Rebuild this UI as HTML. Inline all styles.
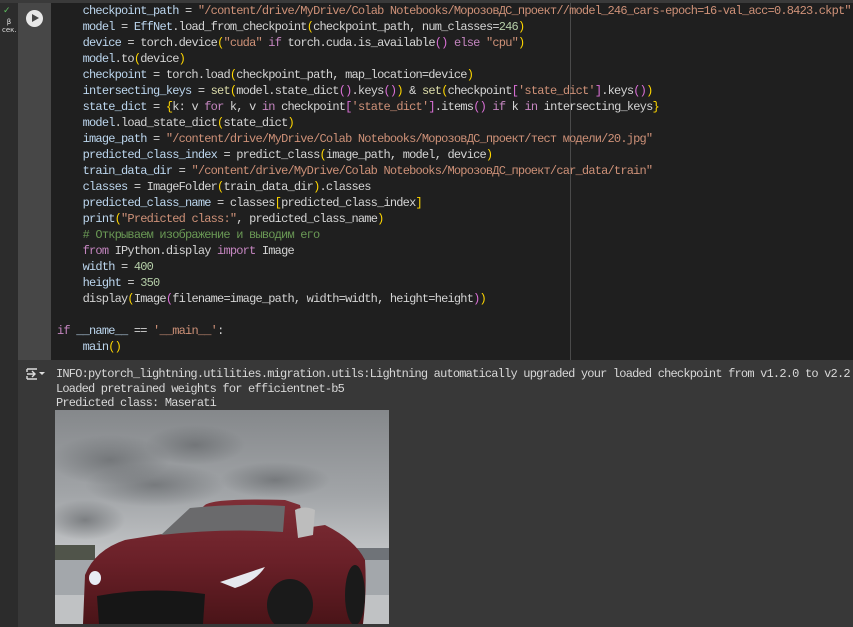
<!DOCTYPE html>
<html><head><meta charset="utf-8"><style>
*{margin:0;padding:0;box-sizing:border-box}
body{width:853px;height:627px;overflow:hidden;background:#383838;position:relative;font-family:"Liberation Mono","DejaVu Sans Mono",monospace}
.g1{position:absolute;left:0;top:0;width:18px;height:627px;background:#2c2c2c}
.top{position:absolute;left:0;top:0;width:853px;height:3px;background:#3a3a3a}
.g2{position:absolute;left:18px;top:3px;width:33px;height:357px;background:#474747}
.code{position:absolute;left:51px;top:3px;width:802px;height:357px;background:#1f1f1f}
.div{position:absolute;left:570px;top:3px;width:1px;height:357px;background:#4a4a4a}
pre{position:absolute;left:57px;top:3px;font-family:inherit;font-size:12px;letter-spacing:-0.8px;line-height:16px;color:#d4d4d4;white-space:pre}
.v{color:#bcd6ee}.s{color:#ce9178}.b{color:#ffd700}.k{color:#c586c0}.n{color:#b5cea8}.c{color:#6a9955}.f{color:#dcdcaa}.p{color:#da70d6}
.out{position:absolute;left:56px;top:367px;font-size:12px;letter-spacing:-0.8px;line-height:14.5px;color:#d8d8d8;white-space:pre}
.run{position:absolute;left:26px;top:10px;width:17px;height:17px;border-radius:50%;background:#e8e8e8}
.run:after{content:"";position:absolute;left:6px;top:4px;border-left:7px solid #474747;border-top:4.5px solid transparent;border-bottom:4.5px solid transparent}
.tick{position:absolute;left:3px;top:6px;font-family:"DejaVu Sans",sans-serif;font-size:9px;color:#5fbf5f}
.sec{position:absolute;left:2px;top:18px;font-family:"DejaVu Sans",sans-serif;font-size:7px;color:#ddd;line-height:8px;text-align:center;width:14px}
</style></head><body>
<div class="g1"></div><div class="top"></div><div class="g2"></div><div class="code"></div><div class="div"></div>
<div class="tick">✓</div><div class="sec">β<br>сек.</div>
<div class="run"></div>
<pre>    <span class="v">checkpoint_path</span> = <span class="s">"/content/drive/MyDrive/Colab Notebooks/МорозовДС_проект//model_246_cars-epoch=16-val_acc=0.8423.ckpt"</span>
    <span class="v">model</span> = <span class="v">EffNet</span>.load_from_checkpoint<span class="b">(</span>checkpoint_path, num_classes=<span class="n">246</span><span class="b">)</span>
    <span class="v">device</span> = torch.device<span class="b">(</span><span class="s">"cuda"</span> <span class="k">if</span> torch.cuda.is_available<span class="p">()</span> <span class="k">else</span> <span class="s">"cpu"</span><span class="b">)</span>
    <span class="v">model</span>.to<span class="b">(</span>device<span class="b">)</span>
    <span class="v">checkpoint</span> = torch.load<span class="b">(</span>checkpoint_path, map_location=device<span class="b">)</span>
    <span class="v">intersecting_keys</span> = <span class="f">set</span><span class="b">(</span>model.state_dict<span class="p">()</span>.keys<span class="p">()</span><span class="b">)</span> &amp; <span class="f">set</span><span class="b">(</span>checkpoint<span class="p">[</span><span class="s">'state_dict'</span><span class="p">]</span>.keys<span class="p">()</span><span class="b">)</span>
    <span class="v">state_dict</span> = <span class="b">{</span>k: v <span class="k">for</span> k, v <span class="k">in</span> checkpoint<span class="p">[</span><span class="s">'state_dict'</span><span class="p">]</span>.items<span class="p">()</span> <span class="k">if</span> k <span class="k">in</span> intersecting_keys<span class="b">}</span>
    <span class="v">model</span>.load_state_dict<span class="b">(</span>state_dict<span class="b">)</span>
    <span class="v">image_path</span> = <span class="s">"/content/drive/MyDrive/Colab Notebooks/МорозовДС_проект/тест модели/20.jpg"</span>
    <span class="v">predicted_class_index</span> = predict_class<span class="b">(</span>image_path, model, device<span class="b">)</span>
    <span class="v">train_data_dir</span> = <span class="s">"/content/drive/MyDrive/Colab Notebooks/МорозовДС_проект/car_data/train"</span>
    <span class="v">classes</span> = ImageFolder<span class="b">(</span>train_data_dir<span class="b">)</span>.classes
    <span class="v">predicted_class_name</span> = classes<span class="b">[</span>predicted_class_index<span class="b">]</span>
    <span class="v">print</span><span class="b">(</span><span class="s">"Predicted class:"</span>, predicted_class_name<span class="b">)</span>
    <span class="c"># Открываем изображение и выводим его</span>
    <span class="k">from</span> IPython.display <span class="k">import</span> Image
    <span class="v">width</span> = <span class="n">400</span>
    <span class="v">height</span> = <span class="n">350</span>
    display<span class="b">(</span>Image<span class="p">(</span>filename=image_path, width=width, height=height<span class="p">)</span><span class="b">)</span>

<span class="k">if</span> <span class="v">__name__</span> == <span class="s">'__main__'</span>:
    <span class="v">main</span><span class="b">()</span></pre>
<svg style="position:absolute;left:26px;top:367px" width="20" height="14" viewBox="0 0 20 14"><g stroke="#ddd" stroke-width="1.4" fill="none"><path d="M1 2h10M1 12h10M1 2v3M1 12v-3M1 7h8M6 4l3 3-3 3"/></g><path d="M13 5h6l-3 3z" fill="#ddd"/></svg>
<div class="out">INFO:pytorch_lightning.utilities.migration.utils:Lightning automatically upgraded your loaded checkpoint from v1.2.0 to v2.2
Loaded pretrained weights for efficientnet-b5
Predicted class: Maserati</div>
<svg style="position:absolute;left:55px;top:410px" width="334" height="214" viewBox="0 0 334 214">
<defs><linearGradient id="sk" x1="0" y1="0" x2="0" y2="1"><stop offset="0" stop-color="#85888b"/><stop offset=".4" stop-color="#a2a5a8"/><stop offset=".7" stop-color="#c6c8ca"/><stop offset="1" stop-color="#d4d6d8"/></linearGradient>
<radialGradient id="cl" cx=".5" cy=".5" r=".5"><stop offset="0" stop-color="#66696c" stop-opacity=".7"/><stop offset="1" stop-color="#66696c" stop-opacity="0"/></radialGradient>
<linearGradient id="car" x1="0" y1="0" x2="0" y2="1"><stop offset="0" stop-color="#7e2e36"/><stop offset=".5" stop-color="#6a2028"/><stop offset="1" stop-color="#4a1418"/></linearGradient></defs>
<rect width="334" height="214" fill="url(#sk)"/>
<ellipse cx="55" cy="50" rx="60" ry="25" fill="url(#cl)"/><ellipse cx="140" cy="35" rx="50" ry="20" fill="url(#cl)"/><ellipse cx="100" cy="75" rx="70" ry="22" fill="url(#cl)"/><ellipse cx="220" cy="70" rx="55" ry="18" fill="url(#cl)"/><ellipse cx="30" cy="110" rx="40" ry="20" fill="url(#cl)"/>
<rect y="148" width="334" height="40" fill="#a3a7ab"/><rect y="185" width="334" height="29" fill="#c0c2c4"/>
<rect x="0" y="135" width="40" height="15" fill="#50544a"/><rect x="300" y="138" width="34" height="12" fill="#6f7378"/>
<path d="M28 214 L30 165 Q40 140 70 130 L120 122 L150 95 Q160 88 230 90 L245 95 L250 118 L270 115 Q300 130 310 150 Q312 180 308 214Z" fill="url(#car)"/>
<path d="M106 125 L135 98 Q185 93 230 96 L228 122 Q170 118 106 125Z" fill="#6a6a6c"/>
<path d="M240 100 Q250 95 260 100 L258 125 L243 128Z" fill="#bdbdbd"/>
<path d="M42 186 Q95 176 150 184 L148 214 L44 214Z" fill="#161616"/>
<ellipse cx="235" cy="195" rx="23" ry="26" fill="#1a1a1a"/><ellipse cx="300" cy="185" rx="10" ry="30" fill="#1a1a1a"/>
<ellipse cx="40" cy="168" rx="6" ry="7" fill="#e8ecf4"/><path d="M165 172 L210 157 Q200 172 180 178Z" fill="#e6e8ee"/>
</svg>
</body></html>
